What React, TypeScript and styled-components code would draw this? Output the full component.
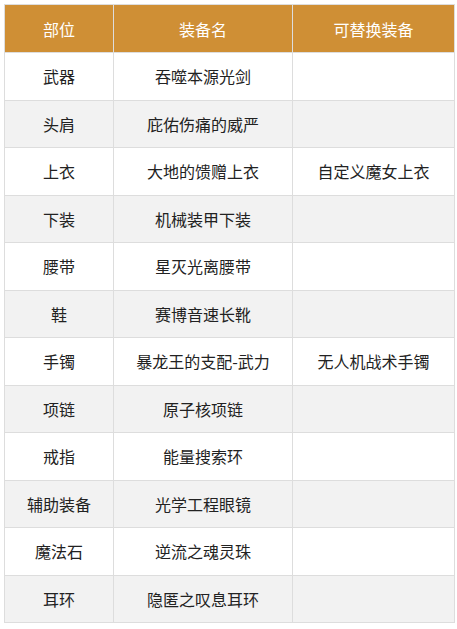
import styled, { createGlobalStyle } from 'styled-components';

const GlobalStyle = createGlobalStyle`
  html, body {
    margin: 0;
    padding: 0;
    background: #ffffff;
  }
  body {
    font-family: "Noto Sans CJK SC", "Microsoft YaHei", sans-serif;
  }
`;

const rows: [string, string, string][] = [
  ['武器', '吞噬本源光剑', ''],
  ['头肩', '庇佑伤痛的威严', ''],
  ['上衣', '大地的馈赠上衣', '自定义魔女上衣'],
  ['下装', '机械装甲下装', ''],
  ['腰带', '星灭光离腰带', ''],
  ['鞋', '赛博音速长靴', ''],
  ['手镯', '暴龙王的支配-武力', '无人机战术手镯'],
  ['项链', '原子核项链', ''],
  ['戒指', '能量搜索环', ''],
  ['辅助装备', '光学工程眼镜', ''],
  ['魔法石', '逆流之魂灵珠', ''],
  ['耳环', '隐匿之叹息耳环', ''],
];

const App = () => {
  return (
    <>
      <GlobalStyle />
      <Wrapper>
        <Table>
          <colgroup>
            <col style={{ width: 109 }} />
            <col style={{ width: 179 }} />
            <col />
          </colgroup>
          <thead>
            <HeadRow>
              <HeadCell>部位</HeadCell>
              <HeadCell>装备名</HeadCell>
              <HeadCell>可替换装备</HeadCell>
            </HeadRow>
          </thead>
          <tbody>
            {rows.map(([slot, name, alt], i) => (
              <Row key={slot} $striped={i % 2 === 1}>
                <Cell>{slot}</Cell>
                <Cell>{name}</Cell>
                <Cell>{alt}</Cell>
              </Row>
            ))}
          </tbody>
        </Table>
      </Wrapper>
    </>
  );
};

export default App;

const Wrapper = styled.div`
  padding: 4px 0 0 4px;
`;

const Table = styled.table`
  width: 451px;
  border-collapse: collapse;
  table-layout: fixed;
  font-size: 16px;
  color: #222;
`;

const HeadRow = styled.tr`
  height: 48px;
  background: #cf8f35;
`;

const HeadCell = styled.th`
  border: 1px solid #dddddd;
  color: #ffffff;
  font-weight: normal;
  text-align: center;
  padding: 0;
`;

const Row = styled.tr<{ $striped: boolean }>`
  height: 47.5px;
  background: ${(p) => (p.$striped ? '#f2f2f2' : '#ffffff')};
`;

const Cell = styled.td`
  border: 1px solid #dddddd;
  text-align: center;
  padding: 0;
`;
